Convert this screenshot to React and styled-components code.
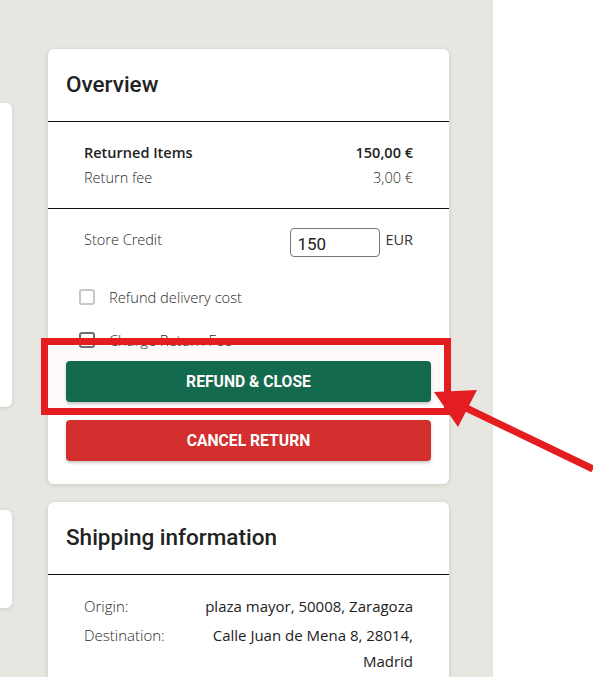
import styled, { createGlobalStyle } from "styled-components";

const GlobalStyle = createGlobalStyle`
  html, body {
    margin: 0;
    padding: 0;
    background: #fff;
  }
  body {
    font-family: "Open Sans", "Noto Sans", sans-serif;
    color: #222;
  }
`;

const summary = [
  { label: "Returned Items", value: "150,00 €", strong: true },
  { label: "Return fee", value: "3,00 €" },
];

const shipping = [
  { label: "Origin:", value: "plaza mayor, 50008, Zaragoza" },
  { label: "Destination:", value: "Calle Juan de Mena 8, 28014, Madrid" },
];

function App() {
  return (
    <Page>
      <GlobalStyle />
      <Main>
        <SideColumn>
          <SideCard height={304} />
          <SideCard height={98} />
        </SideColumn>
        <RightColumn>
          <Card>
            <CardHeader>Overview</CardHeader>
            <Summary>
              {summary.map((row) => (
                <SummaryRow key={row.label} strong={row.strong}>
                  <span>{row.label}</span>
                  <span>{row.value}</span>
                </SummaryRow>
              ))}
            </Summary>
            <Body>
              <CreditRow>
                <CreditLabel>Store Credit</CreditLabel>
                <CreditField>
                  <CreditInput defaultValue="150" />
                  <Currency>EUR</Currency>
                </CreditField>
              </CreditRow>
              <CheckList>
                <CheckRow>
                  <Box muted />
                  <CheckText>Refund delivery cost</CheckText>
                </CheckRow>
                <CheckRow>
                  <Box />
                  <CheckText>Charge Return Fee</CheckText>
                </CheckRow>
              </CheckList>
              <Buttons>
                <Button color="#106c50">Refund &amp; Close</Button>
                <Button color="#d32f2f">Cancel Return</Button>
              </Buttons>
            </Body>
          </Card>
          <Card>
            <CardHeader>Shipping information</CardHeader>
            <InfoGrid>
              {shipping.map((row) => (
                <InfoRow key={row.label}>
                  <InfoLabel>{row.label}</InfoLabel>
                  <InfoValue>{row.value}</InfoValue>
                </InfoRow>
              ))}
            </InfoGrid>
          </Card>
        </RightColumn>
      </Main>

      {/* annotation overlay */}
      <Highlight />
      <Arrow width="593" height="677" viewBox="0 0 593 677">
        <line x1="593" y1="469" x2="462" y2="406" stroke="#e41e20" strokeWidth="7" />
        <polygon points="434,392 477,390 458,427" fill="#e41e20" />
      </Arrow>
    </Page>
  );
}

const Page = styled.div`
  position: relative;
  width: 593px;
  height: 677px;
  overflow: hidden;
  display: flex;
`;

const Main = styled.div`
  width: 493px;
  flex-shrink: 0;
  background: #e8e6e1;
  display: flex;
  justify-content: flex-end;
  gap: 36px;
  padding-right: 44px;
  box-sizing: border-box;
  overflow: hidden;
`;

// left column, mostly off screen
const SideColumn = styled.div`
  flex-shrink: 0;
  width: 300px;
  padding-top: 103px;
  display: flex;
  flex-direction: column;
  gap: 103px;
`;

const SideCard = styled.div`
  height: ${(p) => p.height}px;
  background: #fff;
  border-radius: 6px;
  box-shadow: 0 1px 4px rgba(0, 0, 0, 0.12);
`;

const RightColumn = styled.div`
  flex-shrink: 0;
  width: 401px;
  padding-top: 49px;
  display: flex;
  flex-direction: column;
  gap: 18px;
`;

const Card = styled.div`
  background: #fff;
  border-radius: 6px;
  box-shadow: 0 1px 5px rgba(0, 0, 0, 0.13);
`;

const CardHeader = styled.div`
  height: 73px;
  box-sizing: border-box;
  padding: 0 18px 2px;
  display: flex;
  align-items: center;
  border-bottom: 1px solid #111;
  font-family: Roboto, sans-serif;
  font-weight: 500;
  font-size: 22.5px;
  color: #222;
`;

const Summary = styled.div`
  padding: 20px 36px 19px;
  border-bottom: 1px solid #111;
  display: flex;
  flex-direction: column;
  gap: 3px;
`;

const SummaryRow = styled.div`
  display: flex;
  justify-content: space-between;
  font-size: 14.5px;
  line-height: 22px;
  font-weight: ${(p) => (p.strong ? 600 : 300)};
  color: ${(p) => (p.strong ? "#222" : "#2a2a2a")};
`;

const Body = styled.div`
  padding: 19px 18px 23px;
  display: flex;
  flex-direction: column;
`;

const CreditRow = styled.div`
  display: flex;
  justify-content: space-between;
  align-items: flex-start;
  padding: 0 18px;
`;

const CreditLabel = styled.span`
  font-size: 14.5px;
  font-weight: 300;
  color: #2a2a2a;
  line-height: 24px;
`;

const CreditField = styled.div`
  display: flex;
  align-items: flex-start;
  gap: 5px;
`;

const CreditInput = styled.input`
  width: 90px;
  height: 29px;
  box-sizing: border-box;
  border: 1px solid #777;
  border-radius: 4px;
  padding: 2px 6px 0;
  font-family: Roboto, sans-serif;
  font-size: 17px;
  color: #222;
  outline: none;
`;

const Currency = styled.span`
  font-size: 14.5px;
  font-weight: 400;
  color: #333;
  line-height: 24px;
`;

const CheckList = styled.div`
  display: flex;
  flex-direction: column;
  gap: 27px;
  padding: 32px 0 0 13px;
`;

const CheckRow = styled.label`
  display: flex;
  align-items: center;
  gap: 14px;
  height: 16px;
`;

const Box = styled.span`
  width: 16px;
  height: 16px;
  box-sizing: border-box;
  border: 2px solid ${(p) => (p.muted ? "#c8c8c8" : "#6f6f6f")};
  border-radius: 3px;
  flex-shrink: 0;
`;

const CheckText = styled.span`
  font-size: 14.7px;
  font-weight: 300;
  color: #2a2a2a;
`;

const Buttons = styled.div`
  display: flex;
  flex-direction: column;
  gap: 18px;
  margin-top: 13px;
`;

const Button = styled.button`
  height: 41px;
  border: none;
  border-radius: 4px;
  background: ${(p) => p.color};
  color: #fff;
  font-family: Roboto, sans-serif;
  font-weight: 700;
  font-size: 15.7px;
  text-transform: uppercase;
  box-shadow: 0 2px 3px rgba(0, 0, 0, 0.2);
  cursor: pointer;
`;

const InfoGrid = styled.div`
  padding: 18px 36px 10px;
  display: flex;
  flex-direction: column;
  gap: 3px;
`;

const InfoRow = styled.div`
  display: grid;
  grid-template-columns: 115px 1fr;
  font-size: 15px;
  font-weight: 300;
  line-height: 26px;
  color: #2a2a2a;
`;

const InfoLabel = styled.span``;

const InfoValue = styled.span`
  text-align: right;
  font-weight: 400;
  color: #222;
`;

// annotation marks drawn over the screenshot
const Highlight = styled.div`
  position: absolute;
  left: 41px;
  top: 338px;
  width: 410px;
  height: 77px;
  box-sizing: border-box;
  border: 7px solid #e41e20;
  background: rgba(228, 30, 32, 0.025);
  pointer-events: none;
`;

const Arrow = styled.svg`
  position: absolute;
  left: 0;
  top: 0;
  pointer-events: none;
`;

export default App;
